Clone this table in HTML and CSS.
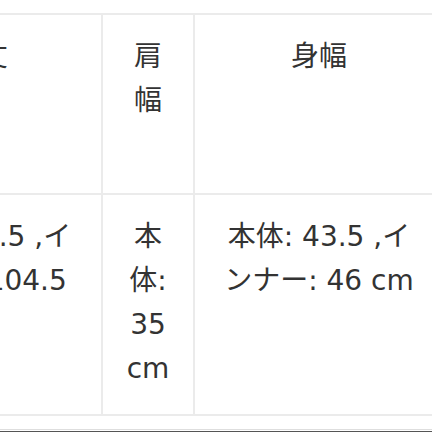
FILE: index.html
```html
<!DOCTYPE html>
<html lang="ja">
<head>
<meta charset="utf-8">
<link rel="stylesheet" href="styles.css">
</head>
<body>
<div class="page">
  <table class="size">
    <colgroup>
      <col class="col-first">
      <col class="col-narrow">
      <col class="col-last">
    </colgroup>
    <tr class="head-row">
      <th>着丈</th>
      <th>肩幅</th>
      <th>身幅</th>
    </tr>
    <tr class="body-row">
      <td>本体: 97.5 ,インナー:104.5 cm</td>
      <td>本体: 35 cm</td>
      <td>本体: 43.5 ,インナー: 46 cm</td>
    </tr>
  </table>
  <div class="rule"></div>
</div>
</body>
</html>
```
FILE: styles.css
```css
html, body {
  margin: 0;
  padding: 0;
  background: #ffffff;
}
body {
  font-family: "DejaVu Sans", "Noto Sans CJK JP", sans-serif;
  color: #333333;
}
.page {
  width: 432px;
  height: 432px;
  overflow: hidden;
}
.size {
  border-collapse: collapse;
  table-layout: fixed;
  width: 586px;
  margin: 13px 0 0 -143px;
}
.col-first { width: 244px; }
.col-narrow { width: 92px; }
.col-last { width: 250px; }
.size th,
.size td {
  border: 2px solid #ebebeb;
  padding: 20px 20px;
  vertical-align: top;
  text-align: center;
  font-weight: normal;
  font-size: 28px;
  line-height: 44px;
}
.head-row { height: 180px; }
.body-row { height: 221px; }
.rule {
  margin-top: 13px;
  height: 1px;
  border-top: 1px solid #dedede;
  border-bottom: 3px solid #555555;
}
```
